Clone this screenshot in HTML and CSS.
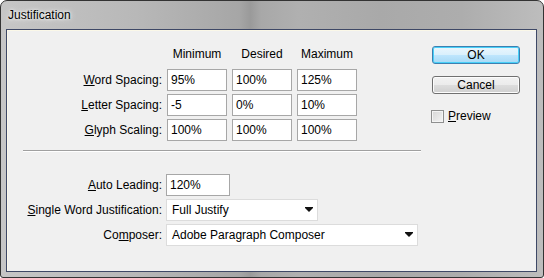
FILE: index.html
```html
<!DOCTYPE html>
<html lang="en">
<head>
  <meta charset="UTF-8">
  <title>Justification</title>
  <link rel="stylesheet" href="styles.css">
</head>
<body>
  <div class="window">
    <div class="titlebar"><span class="title">Justification</span></div>
    <div class="client">
      <div class="form">
        <div class="spacing-grid">
          <span></span>
          <span class="col-head">Minimum</span>
          <span class="col-head">Desired</span>
          <span class="col-head">Maximum</span>

          <label class="field-label"><u>W</u>ord Spacing:</label>
          <div class="textbox">95%</div>
          <div class="textbox">100%</div>
          <div class="textbox">125%</div>

          <label class="field-label"><u>L</u>etter Spacing:</label>
          <div class="textbox">-5</div>
          <div class="textbox">0%</div>
          <div class="textbox">10%</div>

          <label class="field-label"><u>G</u>lyph Scaling:</label>
          <div class="textbox">100%</div>
          <div class="textbox">100%</div>
          <div class="textbox">100%</div>
        </div>

        <div class="separator"></div>

        <div class="option-grid">
          <label class="field-label"><u>A</u>uto Leading:</label>
          <div class="textbox leading">120%</div>

          <label class="field-label"><u>S</u>ingle Word Justification:</label>
          <div class="dropdown single">Full Justify<span class="arrow"></span></div>

          <label class="field-label">Co<u>m</u>poser:</label>
          <div class="dropdown composer">Adobe Paragraph Composer<span class="arrow"></span></div>
        </div>
      </div>

      <div class="side">
        <button class="btn btn-default">OK</button>
        <button class="btn">Cancel</button>
        <label class="check"><span class="box"></span><span><u>P</u>review</span></label>
      </div>
    </div>
  </div>
</body>
</html>
```

FILE: styles.css
```css
body {
  margin: 0;
  font-family: "Liberation Sans", Arial, sans-serif;
  font-size: 12px;
  color: #000;
  background: #fff;
}

.window {
  width: 544px;
  height: 278px;
  box-sizing: border-box;
  border: 1px solid #333;
  border-radius: 7px 7px 3px 3px;
  background: linear-gradient(90deg, #c6c6c6 0%, #b8b8b8 25%, #aaaaaa 40%, #a6a6a6 44%, #9a9a9a 46%, #a8a8a8 48%, #b0b0b0 55%, #a9a9a9 70%, #adadad 85%, #bdbdbd 100%);
  display: flex;
  flex-direction: column;
}

.titlebar {
  height: 28px;
  display: flex;
  align-items: center;
  padding-left: 7px;
}

.title {
  font-size: 12px;
  text-shadow: 0 0 6px #fff, 0 0 3px #fff;
  margin-top: -1px;
}

.client {
  flex: 1;
  margin: 0 6px 5px 5px;
  border: 1px solid #3e4866;
  background: #f0f0f0;
  box-shadow: inset 1px 1px 0 #fbf8e8;
  display: flex;
}

.form {
  width: 398px;
  padding: 17px 0 0 16px;
}

.spacing-grid {
  display: grid;
  grid-template-columns: 139px 60px 60px 60px;
  grid-template-rows: 19px 22px 22px 22px;
  column-gap: 5px;
  row-gap: 3px;
}

.col-head {
  text-align: center;
  line-height: 14px;
}

.field-label {
  text-align: right;
  line-height: 22px;
  white-space: nowrap;
}

.textbox {
  box-sizing: border-box;
  height: 22px;
  border: 1px solid #a7a7a7;
  background: #fff;
  padding-left: 3px;
  line-height: 20px;
}

.separator {
  margin-top: 9px;
  height: 1px;
  background: #a0a0a0;
  border-bottom: 1px solid #fff;
}

.option-grid {
  margin-top: 22px;
  display: grid;
  grid-template-columns: 139px auto;
  grid-auto-rows: 22px;
  column-gap: 4px;
  row-gap: 3px;
  justify-items: start;
}

.option-grid .field-label {
  justify-self: end;
}

.leading {
  width: 64px;
}

.dropdown {
  box-sizing: border-box;
  height: 22px;
  border: 1px solid #dcdcdc;
  background: #fff;
  padding-left: 5px;
  line-height: 20px;
  display: flex;
  justify-content: space-between;
  align-items: center;
}

.single {
  width: 152px;
}

.composer {
  width: 252px;
}

.arrow {
  width: 0;
  height: 0;
  margin-right: 4px;
  border-left: 4px solid transparent;
  border-right: 4px solid transparent;
  border-top: 4px solid #111;
  box-shadow: 0 -1px 0 #111;
}

.side {
  margin-left: 11px;
  padding-top: 16px;
  display: flex;
  flex-direction: column;
  align-items: flex-start;
}

.btn {
  width: 88px;
  height: 18px;
  padding: 0;
  font-family: inherit;
  font-size: 12px;
  color: #000;
  border: 1px solid #707070;
  border-radius: 3px;
  background: linear-gradient(#f2f2f2 0%, #ebebeb 50%, #dddddd 51%, #cfcfcf 100%);
  box-shadow: inset 0 0 0 1px #fcfcfc;
  margin-bottom: 12px;
  line-height: 16px;
}

.btn-default {
  border-color: #3c7fb1;
  background: linear-gradient(#eaf6fd 0%, #d9f0fc 50%, #bee6fd 51%, #a7d9f5 100%);
  box-shadow: inset 0 0 0 1px #48d0f8;
}

.check {
  display: flex;
  align-items: center;
  gap: 4px;
  margin-top: 3px;
  margin-left: -1px;
}

.box {
  width: 11px;
  height: 11px;
  border: 1px solid #8e8f8f;
  background: linear-gradient(135deg, #d6d6d6, #f4f4f4);
  box-shadow: inset 0 0 0 1px #f4f4f4;
}
```
